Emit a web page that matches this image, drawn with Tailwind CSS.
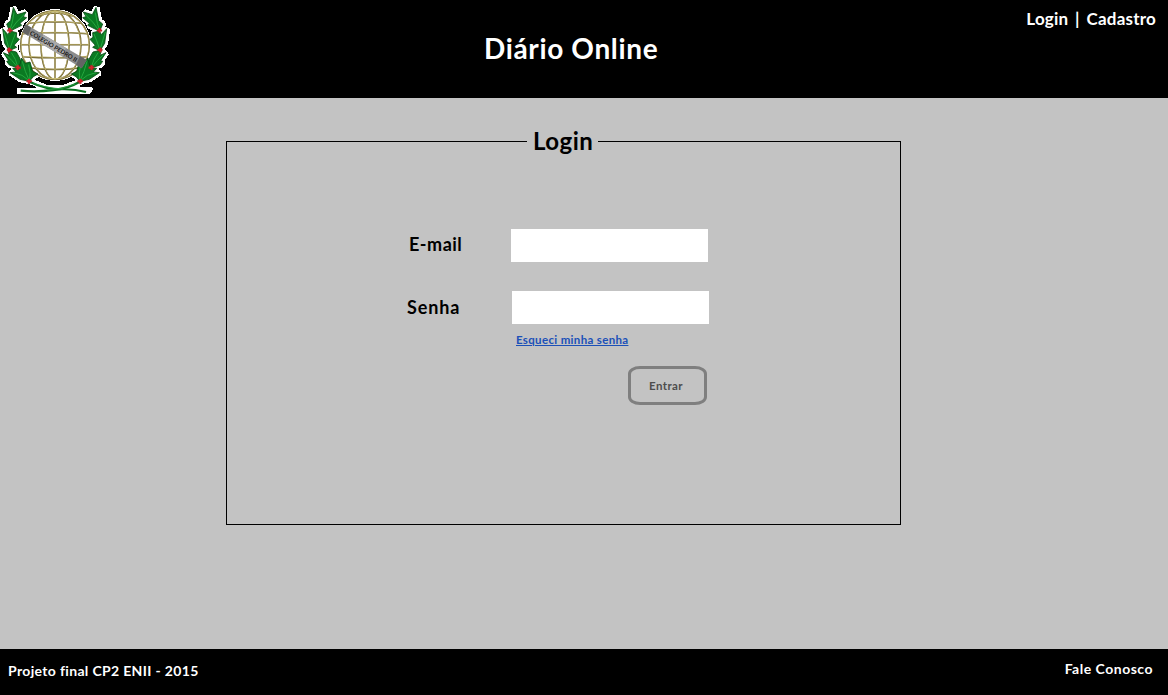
<!DOCTYPE html>
<html lang="pt-BR">
<head>
<meta charset="utf-8">
<title>Diário Online</title>
<script src="https://cdn.jsdelivr.net/npm/@tailwindcss/browser@4"></script>
</head>
<body class="flex h-screen flex-col overflow-hidden bg-[#c3c3c3] font-['Lato','Open_Sans',sans-serif] font-bold text-black">
<header class="grid h-[98px] shrink-0 grid-cols-[484px_1fr_auto] bg-black text-white">
  <svg class="h-[98px] w-[120px]" viewBox="0 0 360 294" role="img" aria-label="Colégio Pedro II">
    <defs>
      <g id="branch">
        <path d="M29 94 L20 72 L32 62 L40 22 L51 44 L78 36 L70 50 L80 53 L60 70 L65 76 Z"/>
        <path d="M28 152 L14 130 L8 86 L24 104 L30 93 L50 98 L49 112 L58 118 L42 136 L50 142 Z"/>
        <path d="M54 204 L28 195 L20 184 L26 182 L10 158 L28 166 L24 150 L49 156 L59 174 L63 188 Z"/>
        <path d="M88 244 L60 238 L30 218 L48 216 L38 205 L58 203 L64 174 L76 190 L90 186 L98 214 L114 222 L100 230 Z"/>
      </g>
      <g id="veins" fill="none">
        <path d="M29 92 L36 70 L42 38 M30 93 L50 66 L74 42"/>
        <path d="M28 150 L20 122 L12 96 M29 148 L38 122 L46 102"/>
        <path d="M53 202 L36 182 L18 164 M54 202 L46 178 L34 158"/>
        <path d="M87 242 L66 226 L40 218 M88 242 L76 214 L67 184 M89 242 L90 218 L86 194"/>
      </g>
      <g id="berries">
        <path d="M26 84h6v5h5v5h-5v4h-5v-4h-5v-5h4z M24 143h6v4h5v6h-5v4h-6v-5h-3v-5h3z M50 196h7v4h5v6h-6v4h-6v-5h-4v-5h4z M84 237h6v4h5v6h-5v4h-6v-5h-4v-5h4z"/>
      </g>
    </defs>
    <g fill="#fff" stroke="#fff" stroke-width="17" stroke-linejoin="bevel" shape-rendering="crispEdges">
      <use href="#branch"/>
      <use href="#branch" transform="matrix(-1 0 0 1 330 0)"/>
      <circle cx="165" cy="135" r="102" stroke-width="12"/>
      <path d="M58 128H75V190H100V230L225 230L260 190H282V110H262L250 180H75Z" stroke-width="3"/>
      <path d="M54 267H108L118 260L84 248L100 242L140 258H190L228 244L244 250L226 262L276 266L268 279H54Z" stroke-width="7"/>
    </g>
    <g fill="none" stroke="#6b5e2b" stroke-width="4.5">
      <circle cx="165" cy="135" r="103"/>
      <ellipse cx="165" cy="135" rx="78" ry="103"/>
      <ellipse cx="165" cy="135" rx="42" ry="103"/>
      <path d="M165 32V238M112 48Q165 30 218 48M86 70Q165 61 244 70M68 101Q165 94 262 101M62 134H268M68 170Q165 177 262 170M88 203Q165 214 242 203"/>
    </g>
    <g fill="none" stroke="#d8cc83" stroke-width="1.8">
      <circle cx="165" cy="135" r="102"/>
      <ellipse cx="165" cy="135" rx="77" ry="102"/>
      <ellipse cx="165" cy="135" rx="41" ry="102"/>
      <path d="M165 33V237M112 47Q165 29 218 47M86 69Q165 60 244 69M68 100Q165 93 262 100M62 133H268M68 169Q165 176 262 169M88 202Q165 213 242 202"/>
    </g>
    <g fill="#0a7a22" stroke="#064812" stroke-width="2.5">
      <use href="#branch"/>
      <use href="#branch" transform="matrix(-1 0 0 1 328 0)"/>
    </g>
    <g stroke="#25a83f" stroke-width="3">
      <use href="#veins"/>
      <use href="#veins" transform="matrix(-1 0 0 1 328 0)"/>
    </g>
    <g fill="none" stroke="#08701f">
      <path d="M90 246Q135 268 185 268Q225 267 258 276" stroke-width="6"/>
      <path d="M238 246Q204 266 160 270Q110 277 62 272" stroke-width="7"/>
      <path d="M100 249Q140 266 190 267M226 252Q190 267 142 270" stroke="#30ac4a" stroke-width="2"/>
    </g>
    <g fill="#d8232c" stroke="#a51b22" stroke-width="1">
      <use href="#berries"/>
      <use href="#berries" transform="matrix(-1 0 0 1 328 0)"/>
    </g>
    <path d="M76 72L260 180L245 205L68 97Z" fill="#8c8c8c"/>
    <path d="M76 72L94 83L84 107L68 97Z M240 168L260 180L245 205L228 194Z" fill="#646464"/>
    <path d="M130 104L198 144L187 169L120 129Z" fill="#aaaaaa"/>
    <text transform="translate(88 103) rotate(31)" font-size="18" textLength="162" lengthAdjust="spacingAndGlyphs" fill="#171717">COLEGIO PEDRO II</text>
  </svg>
  <h1 class="mt-[31px] text-[28px] leading-[34px] tracking-[0.65px] whitespace-nowrap">Diário Online</h1>
  <nav class="mt-[7px] mr-3 h-6 text-[17px] leading-6 tracking-[0.2px] whitespace-nowrap [word-spacing:2.5px]"><a href="#">Login</a> | <a href="#">Cadastro</a></nav>
</header>
<main class="flex-1">
  <form class="mt-[26px] ml-[226px] w-[675px]">
    <fieldset class="h-[401px] border border-black">
      <legend class="ml-[300px] h-[34px] w-[71px] pl-1.5 text-[24px] leading-[34px] tracking-[0.5px] whitespace-nowrap">Login</legend>
      <div class="mt-[71px] ml-[182px] flex h-[33px]">
        <label for="email" class="w-[102px] text-[18px] leading-[30px] tracking-[0.5px]">E-mail</label>
        <input id="email" type="email" class="h-[33px] w-[197px] bg-white px-2 outline-none">
      </div>
      <div class="mt-[29px] ml-[180px] flex h-[33px]">
        <label for="senha" class="w-[105px] text-[18px] leading-8 tracking-[0.9px]">Senha</label>
        <input id="senha" type="password" class="h-[33px] w-[197px] bg-white px-2 outline-none">
      </div>
      <a href="#" class="mt-2 ml-[289px] block h-4 w-fit text-[11.5px] leading-4 tracking-[0.33px] whitespace-nowrap text-[#1b50b8] underline">Esqueci minha senha</a>
      <button type="submit" class="mt-[18px] ml-[401px] block h-[39px] w-[79px] rounded-[12px/8px] border-3 border-[#7f7f7f] pr-[3px] text-[11.5px] tracking-[0.4px] text-[#4d4d4d]">Entrar</button>
    </fieldset>
  </form>
</main>
<footer class="flex h-[46px] shrink-0 justify-between bg-black pr-[15px] pl-2 text-[14px] leading-5 whitespace-nowrap text-white">
  <p class="mt-3 tracking-[0.34px]">Projeto final CP2 ENII - 2015</p>
  <a href="#" class="mt-2.5 tracking-[0.5px]">Fale Conosco</a>
</footer>
</body>
</html>
